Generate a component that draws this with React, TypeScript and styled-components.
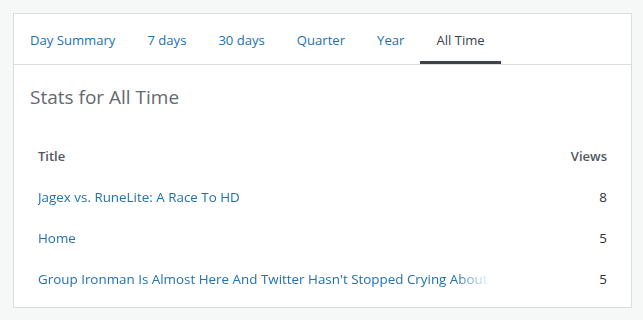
import React, { useState } from 'react';
import styled, { createGlobalStyle } from 'styled-components';

const GlobalStyle = createGlobalStyle`
    html, body {
        margin: 0;
        padding: 0;
        background: #f6f7f7;
        font-family: "Open Sans", "Noto Sans", sans-serif;
        -webkit-font-smoothing: antialiased;
    }
`;

const tabs = ['Day Summary', '7 days', '30 days', 'Quarter', 'Year', 'All Time'];

const rows = [
    { title: 'Jagex vs. RuneLite: A Race To HD', views: 8 },
    { title: 'Home', views: 5 },
    { title: "Group Ironman Is Almost Here And Twitter Hasn't Stopped Crying About It", views: 5 },
];

const App: React.FC = () => {
    const [active, setActive] = useState('All Time');

    return (
        <Page>
            <GlobalStyle />
            <Card>
                <TabBar>
                    {tabs.map((tab) => (
                        <Tab key={tab} active={tab == active} onClick={() => setActive(tab)}>
                            {tab}
                        </Tab>
                    ))}
                </TabBar>
                <Content>
                    <Heading>Stats for {active}</Heading>
                    <Table>
                        <thead>
                            <tr>
                                <HeadCell>Title</HeadCell>
                                <HeadCell align="right">Views</HeadCell>
                            </tr>
                        </thead>
                        <tbody>
                            {rows.map((row, index) => (
                                <tr key={index}>
                                    <Cell>
                                        <PostLink href="#" title={row.title}>{row.title}</PostLink>
                                    </Cell>
                                    <Cell align="right">{row.views}</Cell>
                                </tr>
                            ))}
                        </tbody>
                    </Table>
                </Content>
            </Card>
        </Page>
    );
};

const Page = styled.div`
    padding: 13px 11px 12px 13px;
`;

const Card = styled.div`
    background: #fff;
    border: 1px solid #dcdcde;
`;

const TabBar = styled.nav`
    display: flex;
    border-bottom: 1px solid #dcdcde;
`;

const Tab = styled.div<{ active?: boolean }>`
    padding: 0 16px;
    height: 50px;
    box-sizing: border-box;
    font-size: 13.1px;
    line-height: 52px;
    cursor: pointer;
    color: ${(p) => (p.active ? '#3c434a' : '#2271b1')};
    border-bottom: 3px solid ${(p) => (p.active ? '#3c434a' : 'transparent')};
`;

const Content = styled.div`
    padding: 20px 16px 8px 16px;
`;

const Heading = styled.h2`
    margin: 0 0 26px 0;
    font-size: 19px;
    font-weight: 400;
    line-height: 24px;
    color: #646970;
`;

const Table = styled.table`
    width: 100%;
    border-collapse: collapse;
`;

const HeadCell = styled.th<{ align?: string }>`
    text-align: ${(p) => p.align || 'left'};
    font-size: 13px;
    font-weight: 600;
    color: #50575e;
    height: 41px;
    padding: 0 8px;
`;

const Cell = styled.td<{ align?: string }>`
    text-align: ${(p) => p.align || 'left'};
    font-size: 13.4px;
    color: #2c3338;
    height: 41px;
    padding: 0 8px;
`;

const PostLink = styled.a`
    display: block;
    max-width: 452px;
    overflow: hidden;
    white-space: nowrap;
    color: #2271b1;
    text-decoration: none;
    -webkit-mask-image: linear-gradient(to right, #000 calc(100% - 34px), transparent);
    mask-image: linear-gradient(to right, #000 calc(100% - 34px), transparent);
`;

export default App;
